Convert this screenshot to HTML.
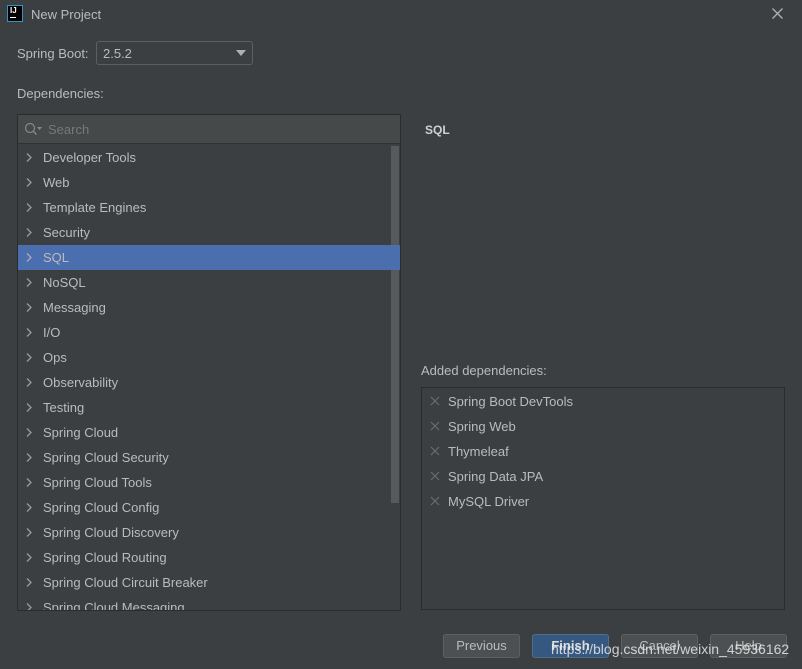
<!DOCTYPE html>
<html><head><meta charset="utf-8"><style>
*{margin:0;padding:0;box-sizing:border-box}
body{width:802px;height:669px;background:#3c3f41;font-family:"Liberation Sans","Noto Sans CJK SC",sans-serif;font-size:13px;color:#bbbbbb;position:relative;overflow:hidden}
.a{position:absolute}
.row{position:absolute;left:18px;width:373px;height:25px;line-height:25px;padding-left:25px;color:#bbbbbb}
.row svg{position:absolute;left:8px;top:8px}
.sel{background:#4b6eaf;width:382px}
.dep{position:absolute;left:448px;color:#bbbbbb}
.x{position:absolute;left:430px;width:10px;height:10px}
.btn{position:absolute;top:634px;width:77px;height:24px;border:1px solid #5e6060;border-radius:3px;background:#4c5052;text-align:center;line-height:22px;color:#bbbbbb}
</style></head><body>
<div class="a" style="left:7px;top:5px;width:16px;height:17px;background:#000;border:1px solid #3592c4"></div>
<div class="a" style="left:10px;top:6px;color:#fff;font-size:8px;font-weight:bold">IJ</div>
<div class="a" style="left:10px;top:17px;width:6px;height:1px;background:#fff"></div>
<div class="a" style="left:31px;top:7px">New Project</div>
<svg class="a" style="left:772px;top:8px" width="11" height="11"><path d="M0.5 0.5L10.5 10.5M10.5 0.5L0.5 10.5" stroke="#b0b0b0" stroke-width="1.3"/></svg>

<div class="a" style="left:17px;top:46px">Spring Boot:</div>
<div class="a" style="left:96px;top:41px;width:157px;height:24px;border:1px solid #5e6060;border-radius:3px;background:#3c3f41"></div>
<div class="a" style="left:103px;top:46px">2.5.2</div>
<svg class="a" style="left:236px;top:50px" width="10" height="6"><path d="M0 0H10L5 6Z" fill="#b0b0b0"/></svg>

<div class="a" style="left:17px;top:86px">Dependencies:</div>

<div class="a" style="left:17px;top:114px;width:384px;height:497px;border:1px solid #2b2b2b;background:#3c3f41"></div>
<div class="a" style="left:18px;top:115px;width:382px;height:29px;background:#45494a;border-bottom:1px solid #323232"></div>
<svg class="a" style="left:24px;top:122px" width="18" height="14"><circle cx="6" cy="6" r="4.5" fill="none" stroke="#888" stroke-width="1.2"/><path d="M9.3 9.3L12.5 12.5" stroke="#888" stroke-width="1.4"/><path d="M13 5H18L15.5 8Z" fill="#888"/></svg>
<div class="a" style="left:48px;top:122px;color:#787878">Search</div>
<div class="a" style="left:391px;top:146px;width:8px;height:357px;background:#57595b"></div>

<div class="row" style="top:145px"><svg width="6" height="9"><path d="M1 0.5L5 4.5L1 8.5" fill="none" stroke="#9a9a9a" stroke-width="1.3"/></svg>Developer Tools</div>
<div class="row" style="top:170px"><svg width="6" height="9"><path d="M1 0.5L5 4.5L1 8.5" fill="none" stroke="#9a9a9a" stroke-width="1.3"/></svg>Web</div>
<div class="row" style="top:195px"><svg width="6" height="9"><path d="M1 0.5L5 4.5L1 8.5" fill="none" stroke="#9a9a9a" stroke-width="1.3"/></svg>Template Engines</div>
<div class="row" style="top:220px"><svg width="6" height="9"><path d="M1 0.5L5 4.5L1 8.5" fill="none" stroke="#9a9a9a" stroke-width="1.3"/></svg>Security</div>
<div class="row sel" style="top:245px"><svg width="6" height="9"><path d="M1 0.5L5 4.5L1 8.5" fill="none" stroke="#aab" stroke-width="1.3"/></svg>SQL</div>
<div class="row" style="top:270px"><svg width="6" height="9"><path d="M1 0.5L5 4.5L1 8.5" fill="none" stroke="#9a9a9a" stroke-width="1.3"/></svg>NoSQL</div>
<div class="row" style="top:295px"><svg width="6" height="9"><path d="M1 0.5L5 4.5L1 8.5" fill="none" stroke="#9a9a9a" stroke-width="1.3"/></svg>Messaging</div>
<div class="row" style="top:320px"><svg width="6" height="9"><path d="M1 0.5L5 4.5L1 8.5" fill="none" stroke="#9a9a9a" stroke-width="1.3"/></svg>I/O</div>
<div class="row" style="top:345px"><svg width="6" height="9"><path d="M1 0.5L5 4.5L1 8.5" fill="none" stroke="#9a9a9a" stroke-width="1.3"/></svg>Ops</div>
<div class="row" style="top:370px"><svg width="6" height="9"><path d="M1 0.5L5 4.5L1 8.5" fill="none" stroke="#9a9a9a" stroke-width="1.3"/></svg>Observability</div>
<div class="row" style="top:395px"><svg width="6" height="9"><path d="M1 0.5L5 4.5L1 8.5" fill="none" stroke="#9a9a9a" stroke-width="1.3"/></svg>Testing</div>
<div class="row" style="top:420px"><svg width="6" height="9"><path d="M1 0.5L5 4.5L1 8.5" fill="none" stroke="#9a9a9a" stroke-width="1.3"/></svg>Spring Cloud</div>
<div class="row" style="top:445px"><svg width="6" height="9"><path d="M1 0.5L5 4.5L1 8.5" fill="none" stroke="#9a9a9a" stroke-width="1.3"/></svg>Spring Cloud Security</div>
<div class="row" style="top:470px"><svg width="6" height="9"><path d="M1 0.5L5 4.5L1 8.5" fill="none" stroke="#9a9a9a" stroke-width="1.3"/></svg>Spring Cloud Tools</div>
<div class="row" style="top:495px"><svg width="6" height="9"><path d="M1 0.5L5 4.5L1 8.5" fill="none" stroke="#9a9a9a" stroke-width="1.3"/></svg>Spring Cloud Config</div>
<div class="row" style="top:520px"><svg width="6" height="9"><path d="M1 0.5L5 4.5L1 8.5" fill="none" stroke="#9a9a9a" stroke-width="1.3"/></svg>Spring Cloud Discovery</div>
<div class="row" style="top:545px"><svg width="6" height="9"><path d="M1 0.5L5 4.5L1 8.5" fill="none" stroke="#9a9a9a" stroke-width="1.3"/></svg>Spring Cloud Routing</div>
<div class="row" style="top:570px"><svg width="6" height="9"><path d="M1 0.5L5 4.5L1 8.5" fill="none" stroke="#9a9a9a" stroke-width="1.3"/></svg>Spring Cloud Circuit Breaker</div>
<div class="a" style="left:18px;top:595px;width:373px;height:15px;overflow:hidden"><div class="row" style="top:0;left:0"><svg width="6" height="9"><path d="M1 0.5L5 4.5L1 8.5" fill="none" stroke="#9a9a9a" stroke-width="1.3"/></svg>Spring Cloud Messaging</div></div>

<div class="a" style="left:425px;top:123px;font-weight:bold;color:#d0d0d0;font-size:12px">SQL</div>
<div class="a" style="left:421px;top:363px">Added dependencies:</div>
<div class="a" style="left:421px;top:387px;width:364px;height:223px;border:1px solid #2b2b2b"></div>
<svg class="x" style="top:396px" width="10" height="10"><path d="M1 1L9 9M9 1L1 9" stroke="#6a6d6f" stroke-width="1.2"/></svg>
<div class="dep" style="top:394px">Spring Boot DevTools</div>
<svg class="x" style="top:421px" width="10" height="10"><path d="M1 1L9 9M9 1L1 9" stroke="#6a6d6f" stroke-width="1.2"/></svg>
<div class="dep" style="top:419px">Spring Web</div>
<svg class="x" style="top:446px" width="10" height="10"><path d="M1 1L9 9M9 1L1 9" stroke="#6a6d6f" stroke-width="1.2"/></svg>
<div class="dep" style="top:444px">Thymeleaf</div>
<svg class="x" style="top:471px" width="10" height="10"><path d="M1 1L9 9M9 1L1 9" stroke="#6a6d6f" stroke-width="1.2"/></svg>
<div class="dep" style="top:469px">Spring Data JPA</div>
<svg class="x" style="top:496px" width="10" height="10"><path d="M1 1L9 9M9 1L1 9" stroke="#6a6d6f" stroke-width="1.2"/></svg>
<div class="dep" style="top:494px">MySQL Driver</div>

<div class="btn" style="left:443px">Previous</div>
<div class="btn" style="left:532px;background:#365880;border-color:#4c708c;font-weight:bold;color:#ddd">Finish</div>
<div class="btn" style="left:621px">Cancel</div>
<div class="btn" style="left:710px">Help</div>
<div class="a" style="left:551px;top:641px;font-size:14px;color:#e8e8e8;opacity:.85">https://blog.csdn.net/weixin_45936162</div>
</body></html>
